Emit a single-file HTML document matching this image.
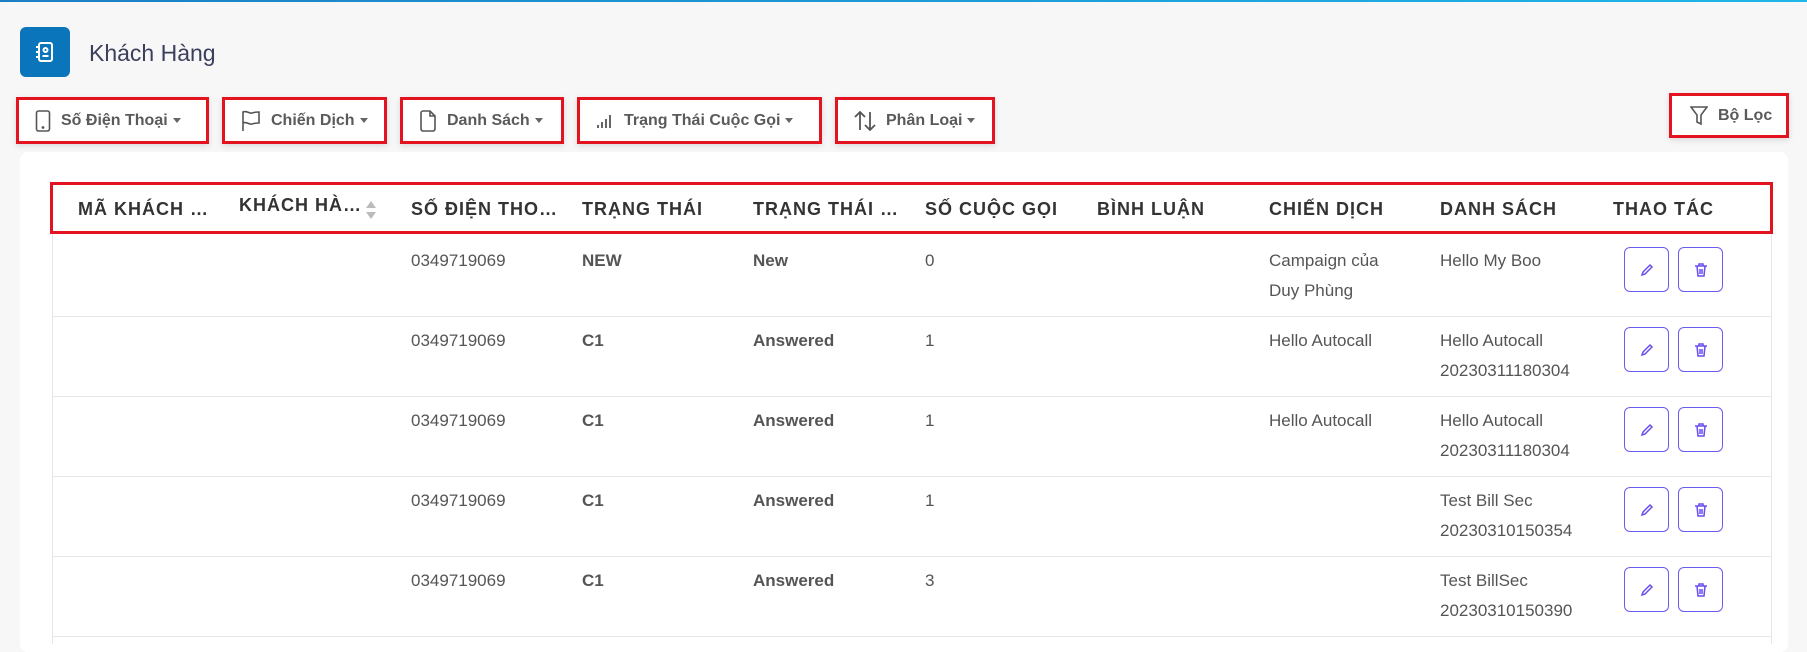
<!DOCTYPE html>
<html><head><meta charset="utf-8"><style>
*{box-sizing:border-box;margin:0;padding:0}
body{width:1807px;height:635px;overflow:hidden;background:#f7f7f8;font-family:"Liberation Sans",sans-serif;position:relative;color:#555}
.topline{position:absolute;left:0;top:0;width:1807px;height:2px;background:linear-gradient(90deg,#1b7fc4,#1fb6e8)}
.logo{position:absolute;left:20px;top:27px;width:50px;height:50px;background:#0a75ba;border-radius:6px;display:flex;align-items:center;justify-content:center}
.title{position:absolute;left:89px;top:40px;font-size:23px;color:#3b3f5c}
.fb{position:absolute;top:97px;height:47px;border:3px solid #e3141f;background:#fff;display:flex;align-items:center;padding-left:16px;font-size:16px;font-weight:bold;color:#5a5a5a;box-shadow:0 2px 6px rgba(0,0,0,.12)}
.fb svg{margin-right:10px;flex:none}
.car{display:inline-block;width:0;height:0;border-left:4px solid transparent;border-right:4px solid transparent;border-top:5px solid #666;margin-left:5px;vertical-align:middle}
.card{position:absolute;left:20px;top:152px;width:1768px;height:500px;background:#fff;border-radius:8px}
.hdr{position:absolute;left:50px;top:182px;width:1723px;height:52px;border:3px solid #e3141f}
.h{position:absolute;top:199px;font-size:18px;font-weight:bold;color:#333;letter-spacing:1px;white-space:nowrap}
.tbl{position:absolute;left:52px;top:234px;width:1720px;height:410px;border-left:1px solid #e6e6e6;border-right:1px solid #e6e6e6}
.rl{position:absolute;left:52px;width:1720px;height:1px;background:#e6e6e6}
.c{position:absolute;font-size:17px;line-height:30px;color:#555;white-space:nowrap}
.b{font-weight:bold}
.ab{position:absolute;width:45px;height:45px;border:1.5px solid #6a5cf0;border-radius:6px;display:flex;align-items:center;justify-content:center}
</style></head><body>
<div class="topline"></div>
<div class="logo"><svg width="20" height="22" viewBox="0 0 20 22" fill="none" stroke="#fff" stroke-width="2"><rect x="4" y="2" width="13" height="18" rx="2"/><circle cx="10.5" cy="9" r="2"/><path d="M7.5 15h6M1 6h4M1 11h4M1 16h4"/></svg></div>
<div class="title">Khách Hàng</div>

<div class="fb" style="left:16px;width:193px"><svg width="16" height="22" viewBox="0 0 16 22" fill="none" stroke="#555" stroke-width="1.6"><rect x="1.5" y="1" width="13" height="20" rx="2"/><circle cx="8" cy="17.5" r=".6" fill="#555"/></svg>Số Điện Thoại<span class="car"></span></div>
<div class="fb" style="left:222px;width:165px"><svg width="20" height="22" viewBox="0 0 20 22" fill="none" stroke="#555" stroke-width="1.6"><path d="M2 21V2c4-2 6 2 9 1s5-1 7-1v11c-2 0-4 0-7 1s-5-3-9-1"/></svg>Chiến Dịch<span class="car"></span></div>
<div class="fb" style="left:400px;width:164px"><svg width="18" height="22" viewBox="0 0 18 22" fill="none" stroke="#555" stroke-width="1.6"><path d="M2 3a2 2 0 012-2h7l5 5v13a2 2 0 01-2 2H4a2 2 0 01-2-2z"/><path d="M11 1v5h5"/></svg>Danh Sách<span class="car"></span></div>
<div class="fb" style="left:577px;width:245px"><svg width="18" height="14" viewBox="0 0 18 14" fill="#666"><rect x="1" y="11" width="2" height="3"/><rect x="5" y="8" width="2" height="6"/><rect x="9" y="5" width="2" height="9"/><rect x="13" y="1" width="2" height="13"/></svg>Trạng Thái Cuộc Gọi<span class="car"></span></div>
<div class="fb" style="left:835px;width:160px"><svg width="22" height="20" viewBox="0 0 22 20" fill="none" stroke="#555" stroke-width="1.8"><path d="M6 19V1M1 6l5-5 5 5M16 1v18M11 14l5 5 5-5"/></svg>Phân Loại<span class="car"></span></div>
<div class="fb" style="left:1669px;top:93px;width:120px;height:45px;padding-left:18px"><svg width="18" height="20" viewBox="0 0 18 20" fill="none" stroke="#555" stroke-width="1.6"><path d="M1 1h16l-6 8v9l-4-2V9z"/></svg>Bộ Lọc</div>

<div class="card"></div>
<div class="tbl"></div>
<div class="hdr"></div>
<div class="h" style="left:78px">MÃ KHÁCH …</div>
<div class="h" style="left:239px;top:195px">KHÁCH HÀ…</div>
<svg style="position:absolute;left:365px;top:200px" width="12" height="20" viewBox="0 0 12 20" fill="#bbb"><path d="M6 1l5 7H1zM6 19l5-7H1z"/></svg>
<div class="h" style="left:411px">SỐ ĐIỆN THO…</div>
<div class="h" style="left:582px">TRẠNG THÁI</div>
<div class="h" style="left:753px">TRẠNG THÁI …</div>
<div class="h" style="left:925px">SỐ CUỘC GỌI</div>
<div class="h" style="left:1097px">BÌNH LUẬN</div>
<div class="h" style="left:1269px">CHIẾN DỊCH</div>
<div class="h" style="left:1440px">DANH SÁCH</div>
<div class="h" style="left:1613px">THAO TÁC</div>

<div class="rl" style="top:316px"></div>
<div class="rl" style="top:396px"></div>
<div class="rl" style="top:476px"></div>
<div class="rl" style="top:556px"></div>
<div class="rl" style="top:636px"></div>

<div class="c" style="left:411px;top:246px">0349719069</div><div class="c b" style="left:582px;top:246px">NEW</div><div class="c b" style="left:753px;top:246px">New</div><div class="c" style="left:925px;top:246px">0</div><div class="c" style="left:1269px;top:246px">Campaign của<br>Duy Phùng</div><div class="c" style="left:1440px;top:246px">Hello My Boo</div>
<div class="c" style="left:411px;top:326px">0349719069</div><div class="c b" style="left:582px;top:326px">C1</div><div class="c b" style="left:753px;top:326px">Answered</div><div class="c" style="left:925px;top:326px">1</div><div class="c" style="left:1269px;top:326px">Hello Autocall</div><div class="c" style="left:1440px;top:326px">Hello Autocall<br>20230311180304</div>
<div class="c" style="left:411px;top:406px">0349719069</div><div class="c b" style="left:582px;top:406px">C1</div><div class="c b" style="left:753px;top:406px">Answered</div><div class="c" style="left:925px;top:406px">1</div><div class="c" style="left:1269px;top:406px">Hello Autocall</div><div class="c" style="left:1440px;top:406px">Hello Autocall<br>20230311180304</div>
<div class="c" style="left:411px;top:486px">0349719069</div><div class="c b" style="left:582px;top:486px">C1</div><div class="c b" style="left:753px;top:486px">Answered</div><div class="c" style="left:925px;top:486px">1</div><div class="c" style="left:1440px;top:486px">Test Bill Sec<br>20230310150354</div>
<div class="c" style="left:411px;top:566px">0349719069</div><div class="c b" style="left:582px;top:566px">C1</div><div class="c b" style="left:753px;top:566px">Answered</div><div class="c" style="left:925px;top:566px">3</div><div class="c" style="left:1440px;top:566px">Test BillSec<br>20230310150390</div>

<div id="act"></div>
<script>
var pen='<svg width="14" height="14" viewBox="0 0 14 14" fill="none" stroke="#6a4cf0" stroke-width="1.5"><path d="M2 12l1-3 7-7 2 2-7 7z"/></svg>';
var bin='<svg width="14" height="16" viewBox="0 0 14 16" fill="none" stroke="#6a4cf0" stroke-width="1.5"><path d="M1 4h12M5 4V2h4v2M3 4l1 10h6l1-10M6 7v5M8 7v5"/></svg>';
var h='';[247,327,407,487,567].forEach(function(t){h+='<div class="ab" style="left:1624px;top:'+t+'px">'+pen+'</div><div class="ab" style="left:1678px;top:'+t+'px">'+bin+'</div>';});
document.getElementById('act').innerHTML=h;
</script>
</body></html>
